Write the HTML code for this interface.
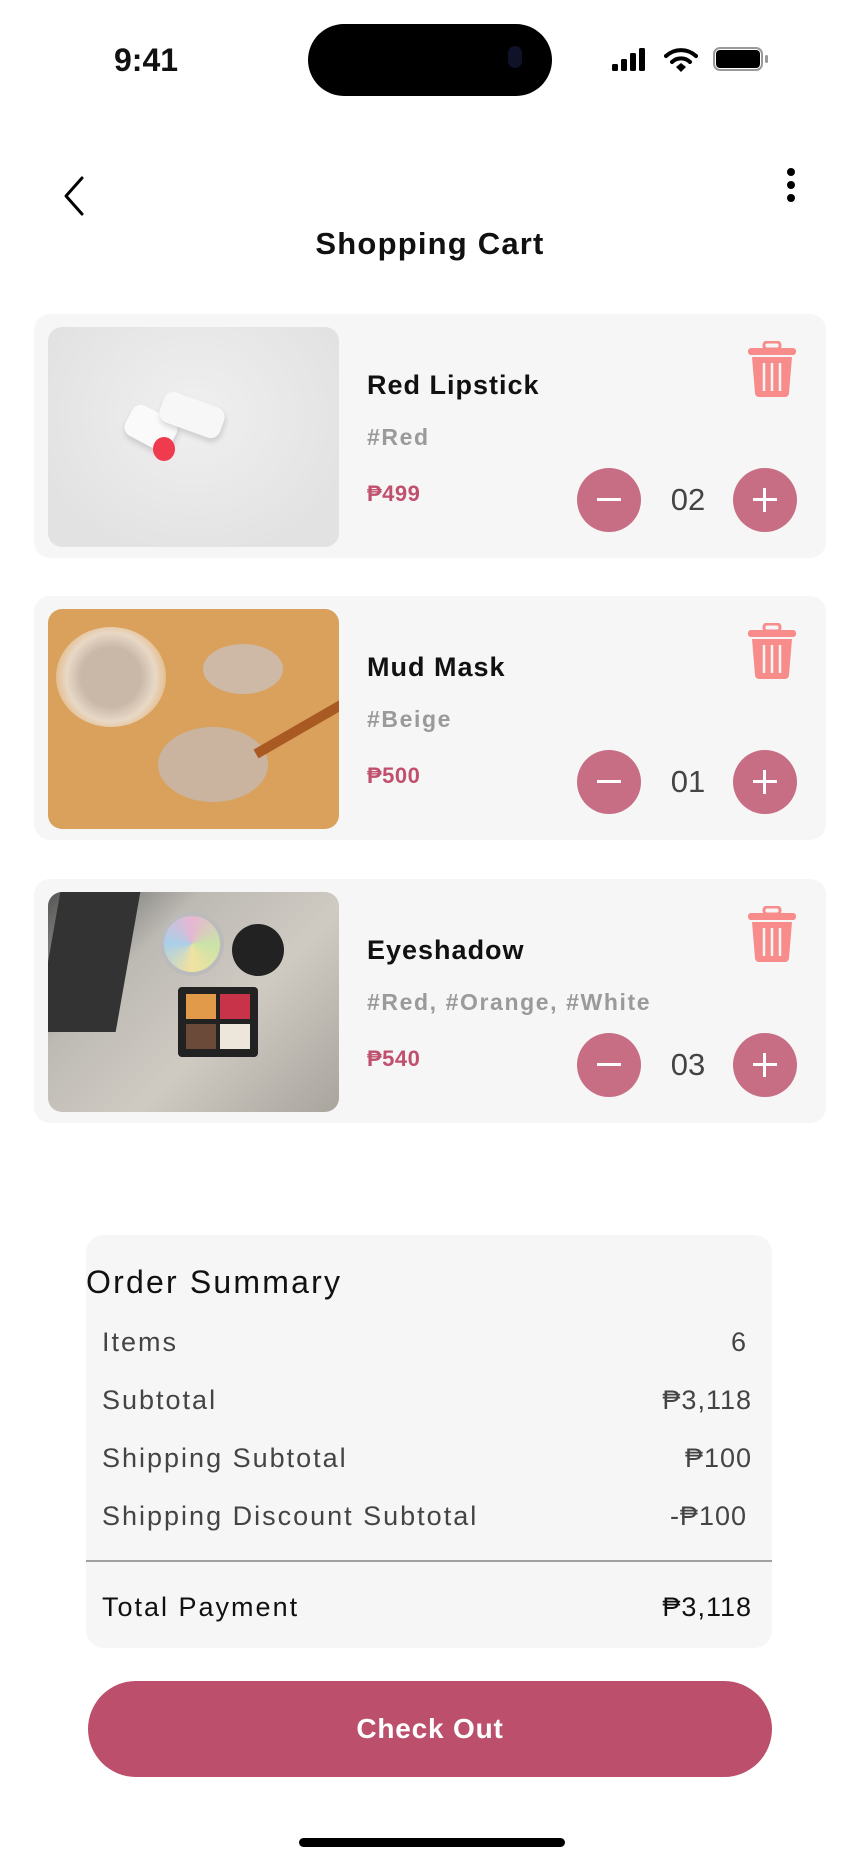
<!DOCTYPE html>
<html><head><meta charset="utf-8"><style>
*{margin:0;padding:0;box-sizing:border-box}
body{width:860px;height:1864px;background:#fff;font-family:"Liberation Sans",sans-serif;position:relative;overflow:hidden}
.a{position:absolute}
.card{position:absolute;left:34px;width:792px;height:244px;background:#f6f6f6;border-radius:16px}
.img{position:absolute;left:14px;top:13px;width:291px;height:220px;border-radius:14px;overflow:hidden}
.name{position:absolute;left:333px;top:56px;font-size:27px;font-weight:bold;color:#111;letter-spacing:1px}
.tag{position:absolute;left:333px;top:110px;font-size:23px;font-weight:bold;color:#9a9a9a;letter-spacing:1.6px}
.price{position:absolute;left:333px;top:167px;font-size:22px;font-weight:bold;color:#c0506e;letter-spacing:.5px}
.btn{position:absolute;width:64px;height:64px;border-radius:50%;background:#c76e85;top:154px}
.btn i{position:absolute;left:20px;top:30px;width:24px;height:3px;background:#fff}
.btn b{position:absolute;left:30px;top:20px;width:3px;height:24px;background:#fff}
.qty{position:absolute;left:620px;width:68px;text-align:center;top:168px;font-size:31px;color:#444}
.trash{position:absolute;left:713px;top:27px}
.row{position:absolute;left:102px;width:650px;font-size:27px;color:#444;letter-spacing:2px}
.row span{position:absolute;right:0;top:0;letter-spacing:1px}
</style></head><body>
<div class="a" style="left:114px;top:42px;font-size:32px;font-weight:bold;color:#111">9:41</div>
<div class="a" style="left:308px;top:24px;width:244px;height:72px;border-radius:36px;background:#000"></div>
<div class="a" style="left:508px;top:46px;width:14px;height:22px;border-radius:7px;background:#10122a"></div>
<svg class="a" style="left:612px;top:48px" width="40" height="24"><rect x="0" y="16" width="6" height="7" rx="1.5"/><rect x="9" y="11" width="6" height="12" rx="1.5"/><rect x="18" y="5" width="6" height="18" rx="1.5"/><rect x="27" y="0" width="6" height="23" rx="1.5"/></svg>
<svg class="a" style="left:664px;top:47px" width="34" height="26" viewBox="0 0 34 26"><path d="M2 9a22 22 0 0 1 30 0" fill="none" stroke="#000" stroke-width="4" stroke-linecap="round"/><path d="M8 15a13 13 0 0 1 18 0" fill="none" stroke="#000" stroke-width="4" stroke-linecap="round"/><path d="M12 20l5-4 5 4-5 5z"/></svg>
<div class="a" style="left:713px;top:47px;width:50px;height:24px;border:2px solid #999;border-radius:7px"></div>
<div class="a" style="left:716px;top:50px;width:44px;height:18px;border-radius:4px;background:#000"></div>
<div class="a" style="left:765px;top:55px;width:3px;height:8px;border-radius:2px;background:#999"></div>
<svg class="a" style="left:58px;top:174px" width="30" height="44"><path d="M24 4L8 22l16 18" fill="none" stroke="#000" stroke-width="3" stroke-linecap="round" stroke-linejoin="round"/></svg>
<div class="a" style="left:787px;top:168px;width:8px;height:8px;border-radius:50%;background:#000"></div>
<div class="a" style="left:787px;top:181px;width:8px;height:8px;border-radius:50%;background:#000"></div>
<div class="a" style="left:787px;top:194px;width:8px;height:8px;border-radius:50%;background:#000"></div>
<div class="a" style="left:0;width:860px;text-align:center;top:226px;font-size:31px;font-weight:bold;color:#111;letter-spacing:1.2px">Shopping Cart</div>

<div class="card" style="top:314px">
 <div class="img" style="background:radial-gradient(ellipse at 50% 40%,#f0f0f0,#e2e2e3 80%)">
  <div class="a" style="left:78px;top:84px;width:50px;height:34px;background:#fafafa;border-radius:10px;transform:rotate(28deg);box-shadow:2px 3px 6px rgba(0,0,0,.15)"></div>
  <div class="a" style="left:112px;top:72px;width:64px;height:32px;background:#f7f7f7;border-radius:10px;transform:rotate(20deg);box-shadow:2px 3px 6px rgba(0,0,0,.15)"></div>
  <div class="a" style="left:105px;top:110px;width:22px;height:24px;background:#f03a4e;border-radius:50%"></div>
 </div>
 <div class="name">Red Lipstick</div><div class="tag">#Red</div><div class="price">₱499</div>
 <div class="btn" style="left:543px"><i></i></div><div class="qty">02</div><div class="btn" style="left:699px"><i></i><b></b></div>
 <svg class="trash" width="50" height="56" viewBox="0 0 50 56"><rect x="17" y="1" width="16" height="7" rx="3" fill="none" stroke="#f78c8a" stroke-width="3"/><rect x="1" y="7" width="48" height="7" rx="3" fill="#f78c8a"/><path d="M5 16h40l-3 36a4 4 0 0 1-4 4H12a4 4 0 0 1-4-4z" fill="#f78c8a"/><path d="M17 22v28M25 22v28M33 22v28" stroke="#f6f6f6" stroke-width="2.5"/></svg>
</div>

<div class="card" style="top:596px">
 <div class="img" style="background:#d9a15c">
  <div class="a" style="left:8px;top:18px;width:110px;height:100px;border-radius:50%;background:radial-gradient(circle,#c9b8a8 40%,#e8d8c6 60%,rgba(255,255,255,.3) 75%)"></div>
  <div class="a" style="left:155px;top:35px;width:80px;height:50px;border-radius:50%;background:#cdb9a6"></div>
  <div class="a" style="left:110px;top:118px;width:110px;height:75px;border-radius:50%;background:#cbb49f"></div>
  <div class="a" style="left:200px;top:110px;width:120px;height:10px;background:#a85a22;transform:rotate(-30deg)"></div>
 </div>
 <div class="name">Mud Mask</div><div class="tag">#Beige</div><div class="price">₱500</div>
 <div class="btn" style="left:543px"><i></i></div><div class="qty">01</div><div class="btn" style="left:699px"><i></i><b></b></div>
 <svg class="trash" width="50" height="56" viewBox="0 0 50 56"><rect x="17" y="1" width="16" height="7" rx="3" fill="none" stroke="#f78c8a" stroke-width="3"/><rect x="1" y="7" width="48" height="7" rx="3" fill="#f78c8a"/><path d="M5 16h40l-3 36a4 4 0 0 1-4 4H12a4 4 0 0 1-4-4z" fill="#f78c8a"/><path d="M17 22v28M25 22v28M33 22v28" stroke="#f6f6f6" stroke-width="2.5"/></svg>
</div>

<div class="card" style="top:879px">
 <div class="img" style="background:linear-gradient(135deg,#555 0%,#bdbab4 30%,#cfcac2 60%,#a9a59e 100%)">
  <div class="a" style="left:0;top:0;width:80px;height:140px;background:#333;transform:skewX(-10deg)"></div>
  <div class="a" style="left:112px;top:20px;width:64px;height:64px;border-radius:50%;background:conic-gradient(#e7b6d3,#c9e3a8,#f1e2a0,#a9cfe8,#e7b6d3);border:4px solid #bbb"></div>
  <div class="a" style="left:184px;top:32px;width:52px;height:52px;border-radius:50%;background:#222"></div>
  <div class="a" style="left:130px;top:95px;width:80px;height:70px;background:#222;border-radius:4px"></div>
  <div class="a" style="left:138px;top:102px;width:30px;height:25px;background:#e09a4a"></div>
  <div class="a" style="left:172px;top:102px;width:30px;height:25px;background:#c8334a"></div>
  <div class="a" style="left:138px;top:132px;width:30px;height:25px;background:#6b4a3a"></div>
  <div class="a" style="left:172px;top:132px;width:30px;height:25px;background:#ece7da"></div>
 </div>
 <div class="name">Eyeshadow</div><div class="tag">#Red, #Orange, #White</div><div class="price">₱540</div>
 <div class="btn" style="left:543px"><i></i></div><div class="qty">03</div><div class="btn" style="left:699px"><i></i><b></b></div>
 <svg class="trash" width="50" height="56" viewBox="0 0 50 56"><rect x="17" y="1" width="16" height="7" rx="3" fill="none" stroke="#f78c8a" stroke-width="3"/><rect x="1" y="7" width="48" height="7" rx="3" fill="#f78c8a"/><path d="M5 16h40l-3 36a4 4 0 0 1-4 4H12a4 4 0 0 1-4-4z" fill="#f78c8a"/><path d="M17 22v28M25 22v28M33 22v28" stroke="#f6f6f6" stroke-width="2.5"/></svg>
</div>

<div class="a" style="left:86px;top:1235px;width:686px;height:413px;background:#f6f6f6;border-radius:18px"></div>
<div class="a" style="left:86px;top:1264px;font-size:32px;color:#111;letter-spacing:2.2px">Order Summary</div>
<div class="row" style="top:1327px">Items<span style="right:5px">6</span></div>
<div class="row" style="top:1385px">Subtotal<span>₱3,118</span></div>
<div class="row" style="top:1443px">Shipping Subtotal<span>₱100</span></div>
<div class="row" style="top:1501px">Shipping Discount Subtotal<span style="right:5px">-₱100</span></div>
<div class="a" style="left:86px;top:1560px;width:686px;height:2px;background:#a0a0a0"></div>
<div class="row" style="top:1592px;color:#111">Total Payment<span>₱3,118</span></div>

<div class="a" style="left:88px;top:1681px;width:684px;height:96px;border-radius:48px;background:#bc4f6c;color:#fff;font-size:28px;font-weight:bold;text-align:center;line-height:96px;letter-spacing:.8px">Check Out</div>
<div class="a" style="left:299px;top:1838px;width:266px;height:9px;border-radius:5px;background:#000"></div>
</body></html>
